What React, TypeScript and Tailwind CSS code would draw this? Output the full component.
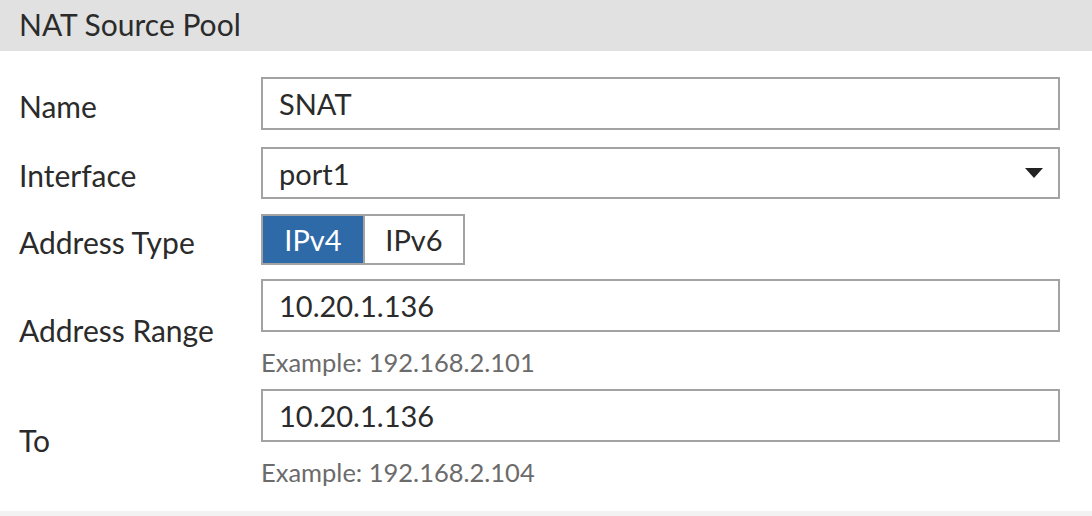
export default function App() {
  return (
    <main className="w-[1092px] h-[516px] bg-white text-[#2b2b2b] overflow-hidden flex flex-col" style={{ fontFamily: "Lato, 'Open Sans', sans-serif" }}>
      {/* HEADER */}
      <div className="h-[51px] shrink-0 bg-[#e1e1e1] flex items-center px-[19px] pb-[3px] text-[30px] leading-none">
        NAT Source Pool
      </div>

      <div className="flex-1 flex flex-col pr-[32px]">
        {/* NAME */}
        <div className="flex items-center mt-[26px]">
          <div className="w-[261px] shrink-0 pl-[19px] text-[30px] leading-none pt-[4px]">Name</div>
          <div className="flex-1 h-[53px] border-2 border-[#a3a3a3] flex items-center px-[16px] text-[29px] leading-none">SNAT</div>
        </div>

        {/* INTERFACE */}
        <div className="flex items-center mt-[17px]">
          <div className="w-[261px] shrink-0 pl-[19px] text-[30px] leading-none pt-[4px]">Interface</div>
          <div className="flex-1 h-[52px] border-2 border-[#a3a3a3] flex items-center justify-between pl-[16px] pr-[15px] text-[29px] leading-none">
            <span>port1</span>
            <svg width="18" height="10" viewBox="0 0 18 10">
              <path d="M0 0 H18 L9 10 Z" fill="#222" />
            </svg>
          </div>
        </div>

        {/* ADDRESS TYPE */}
        <div className="flex items-center mt-[15px]">
          <div className="w-[261px] shrink-0 pl-[19px] text-[30px] leading-none pt-[4px]">Address Type</div>
          <div className="flex h-[51px] border-2 border-[#a3a3a3] text-[29px] leading-none">
            <div className="w-[100px] bg-[#2f6aa8] text-white flex items-center justify-center">IPv4</div>
            <div className="w-[100px] border-l-2 border-[#a3a3a3] flex items-center justify-center">IPv6</div>
          </div>
        </div>

        {/* ADDRESS RANGE */}
        <div className="flex items-center mt-[14px]">
          <div className="w-[261px] shrink-0 pl-[19px] text-[30px] leading-none pt-[4px]">Address Range</div>
          <div className="flex-1 flex flex-col">
            <div className="h-[53px] border-2 border-[#a3a3a3] flex items-center px-[16px] text-[29px] leading-none">10.20.1.136</div>
            <div className="text-[25.5px] text-[#6b6b6b] mt-[15px] leading-[30px]">Example: 192.168.2.101</div>
          </div>
        </div>

        {/* TO */}
        <div className="flex items-center mt-[12px]">
          <div className="w-[261px] shrink-0 pl-[19px] text-[30px] leading-none pt-[4px]">To</div>
          <div className="flex-1 flex flex-col">
            <div className="h-[53px] border-2 border-[#a3a3a3] flex items-center px-[16px] text-[29px] leading-none">10.20.1.136</div>
            <div className="text-[25.5px] text-[#6b6b6b] mt-[15px] leading-[30px]">Example: 192.168.2.104</div>
          </div>
        </div>
      </div>

      {/* FOOTER BAR */}
      <div className="h-[5px] shrink-0 bg-[#f2f2f2]" />
    </main>
  );
}
